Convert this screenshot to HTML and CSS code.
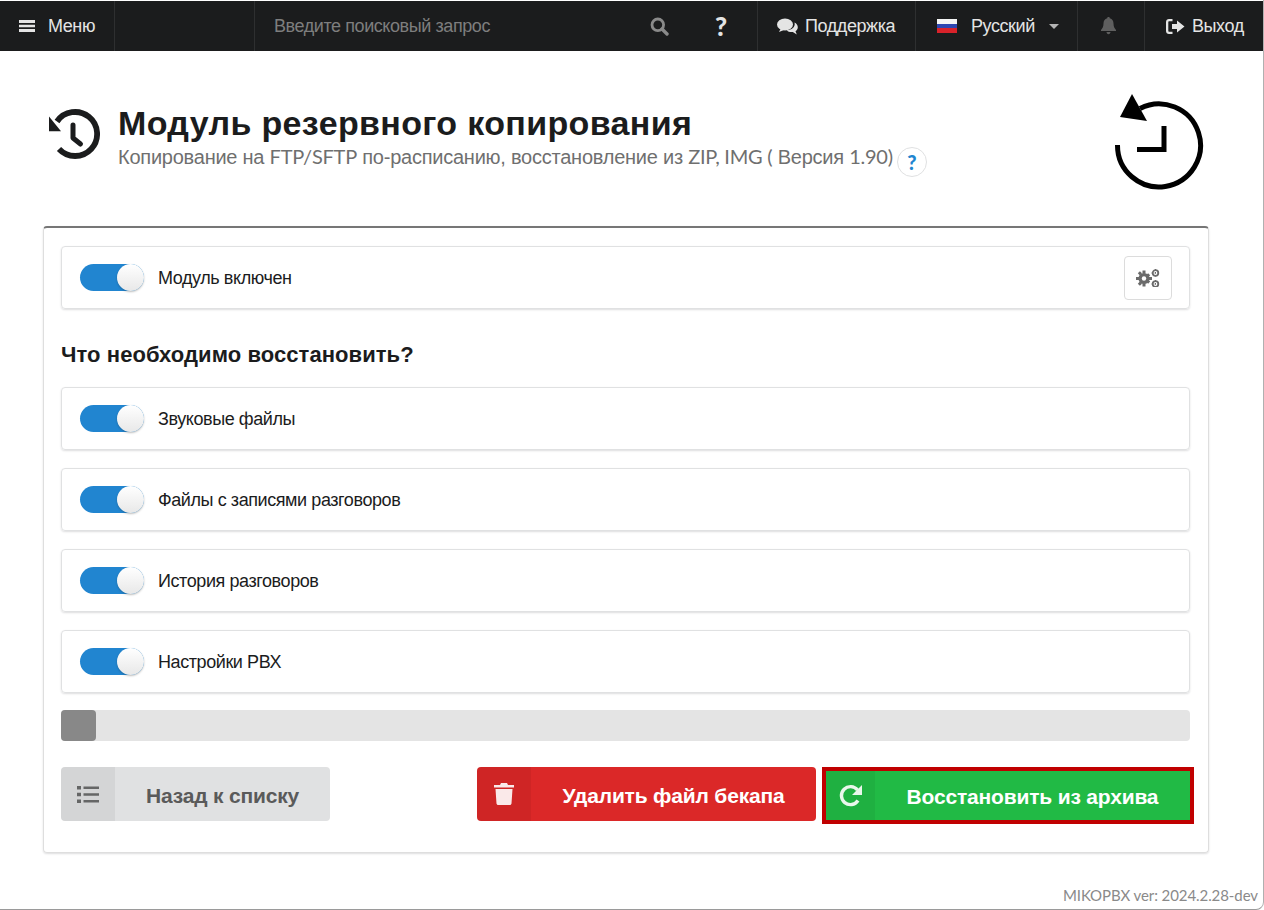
FILE: index.html
```html
<!DOCTYPE html>
<html lang="ru">
  <head>
    <meta charset="UTF-8" />
    <title>Модуль резервного копирования</title>
    <link rel="stylesheet" href="styles.css">
  </head>
  <body>
    <div class="window">
      <nav class="topbar">
        <a class="top-item menu-item">
          <svg class="top-icon" width="16" height="14" viewBox="0 0 16 14"><path fill="#e4e4e4" d="M0 1h16v3H0zM0 5.700h16v2.600H0zM0 10h16v3H0z"/></svg>
          Меню
        </a>
        <div class="top-spacer"></div>
        <div class="search">Введите поисковый запрос</div>
        <svg class="search-icon" width="19" height="19" viewBox="0 0 19 19"><circle cx="7.800" cy="7.800" r="5.800" fill="none" stroke="#8a8a8a" stroke-width="2.800"/><path d="M12 12l5 5" stroke="#8a8a8a" stroke-width="3.400" stroke-linecap="round"/></svg>
        <span class="help-mark">?</span>
        <a class="top-item support">
          <svg width="21" height="17" viewBox="0 0 21 17"><ellipse cx="8" cy="6.500" rx="8" ry="6" fill="#e4e4e4"/><path d="M2 14l2-4 3 2z" fill="#e4e4e4"/><path d="M17.500 4.600c2 1 3.300 2.700 3.300 4.600 0 1.600-.9 3-2.300 4l1.300 3.200-4-2.400c-2.400.3-4.800-.3-6.300-1.800 4.700.2 9.300-2.900 8-7.600z" fill="#e4e4e4"/></svg>
          Поддержка
        </a>
        <a class="top-item lang">
          <span class="flag"><i class="flag-white"></i><i class="flag-blue"></i><i class="flag-red"></i></span>
          <span class="lang-name">Русский</span>
          <i class="caret"></i>
        </a>
        <a class="top-item bell">
          <svg width="15" height="18" viewBox="0 0 15 18"><path fill="#5f5f5f" d="M7.500 0c.8 0 1.300.5 1.300 1.300 2.600.6 3.700 2.800 3.700 5.200 0 3.600 1.200 5 2.500 6.500v1H0v-1c1.300-1.500 2.500-2.900 2.500-6.500 0-2.400 1.100-4.600 3.700-5.200C6.200.5 6.700 0 7.500 0zM5.500 15h4c0 1.200-.9 2.200-2 2.200s-2-1-2-2.200z"/></svg>
        </a>
        <a class="top-item logout">
          <svg width="19" height="15" viewBox="0 0 19 15"><path fill="#e4e4e4" d="M6.500 0v2.300H3.300c-.6 0-1 .4-1 1v8.400c0 .6.400 1 1 1h3.200V15H3C1.300 15 0 13.700 0 12V3c0-1.700 1.300-3 3-3zM11 1.500l7.500 6-7.500 6V10H6V5h5z"/></svg>
          Выход
        </a>
      </nav>

      <main class="content">
        <header class="page-header">
          <svg class="header-icon" width="54" height="54" viewBox="0 0 54 54"><path fill="none" stroke="#1b1c1d" stroke-width="5.800" d="M11 12.500A22 22 0 1 1 13 40"/><path fill="#1b1c1d" d="M3 7.500l12 14.800H3z"/><path fill="none" stroke="#1b1c1d" stroke-width="5" stroke-linecap="round" stroke-linejoin="round" d="M27 16v13l7.500 6"/></svg>
          <div class="header-text">
            <h1>Модуль резервного копирования</h1>
            <p><span class="subtitle">Копирование на <span class="lat">FTP/SFTP</span> по-расписанию, восстановление из <span class="lat">ZIP, IMG (</span> Версия <span class="lat">1.90)</span></span> <span class="hint">?</span></p>
          </div>
          <svg class="module-logo" width="90" height="96" viewBox="0 0 90 96"><path fill="none" stroke="#000" stroke-width="5" d="M26 14.500A41.500 41.500 0 1 1 3.500 51"/><path fill="#000" d="M18 0l15 27-27-4z"/><path fill="none" stroke="#000" stroke-width="5" d="M50 32v23.500H23"/></svg>
        </header>

        <section class="panel">
          <div class="row">
            <span class="toggle"><i class="knob"></i></span>
            <label>Модуль включен</label>
            <button class="gear-btn" type="button">
              <svg width="24" height="18" viewBox="0 0 24 18"><g fill="#6b6b6b"><circle cx="8" cy="9.500" r="5.500"/><path d="M6.500 1.500h3v3h-3zM6.500 14.500h3v3h-3zM0 8h3v3H0zM13 8h3v3h-3zM1.800 4.300l2.100-2.100 2.100 2.100-2.100 2.100zM10 12.600l2.100-2.100 2.100 2.100-2.100 2.100zM1.800 14.700l2.100-2.100 2.100 2.100-2.100 2.100zM10 6.300l2.100-2.100 2.100 2.100-2.100 2.100z"/></g><circle cx="8" cy="9.500" r="2.200" fill="#fff"/><g fill="none" stroke="#6b6b6b"><circle cx="19.500" cy="4" r="2.800" stroke-width="1.800"/><circle cx="19.500" cy="15" r="2.800" stroke-width="1.800"/><path stroke-width="1" stroke-dasharray="1.500 1.500" d="M19.500 0v8M15.500 4h8M19.500 11v7M15.500 15h8"/></g></svg>
            </button>
          </div>

          <h2>Что необходимо восстановить?</h2>

          <div class="row"><span class="toggle"><i class="knob"></i></span><label>Звуковые файлы</label></div>
          <div class="row"><span class="toggle"><i class="knob"></i></span><label>Файлы с записями разговоров</label></div>
          <div class="row"><span class="toggle"><i class="knob"></i></span><label>История разговоров</label></div>
          <div class="row"><span class="toggle"><i class="knob"></i></span><label>Настройки РВХ</label></div>

          <div class="progress"><div class="progress-bar"></div></div>

          <div class="actions">
            <button class="btn btn-grey" type="button">
              <span class="btn-icon"><svg width="22" height="17" viewBox="0 0 22 17"><path fill="currentColor" d="M0 0h4v3.500H0zM0 6.700h4v3.500H0zM0 13.500h4V17H0zM6.500.5H22v2.600H6.500zM6.500 7.200H22v2.600H6.500zM6.500 14H22v2.600H6.500z"/></svg></span>
              <span class="btn-label">Назад к списку</span>
            </button>
            <div class="actions-right">
              <button class="btn btn-red" type="button">
                <span class="btn-icon"><svg width="20" height="22" viewBox="0 0 20 22"><path fill="currentColor" d="M7 0h6l1 2h6v2.500H0V2h6zM1.500 6h17l-1 14.500c-.1.900-.8 1.500-1.700 1.500H4.200c-.9 0-1.600-.6-1.700-1.500z"/></svg></span>
                <span class="btn-label">Удалить файл бекапа</span>
              </button>
              <button class="btn btn-green" type="button">
                <span class="btn-icon"><svg width="24" height="24" viewBox="0 0 24 24"><path fill="none" stroke="currentColor" stroke-width="3.400" d="M19 16.500A9 9 0 1 1 18.500 6"/><path fill="currentColor" d="M23 1v10H13z"/></svg></span>
                <span class="btn-label">Восстановить из архива</span>
              </button>
            </div>
          </div>
        </section>
      </main>
      <footer class="version">MIKOPBX ver: 2024.2.28-dev</footer>
    </div>
  </body>
</html>
```

FILE: styles.css
```css
html,
body {
  margin: 0;
  height: 100%;
  background: #fff;
}

body {
  font-family: "Liberation Sans", Arial, sans-serif;
  color: #1b1c1d;
  font-size: 18px;
  letter-spacing: -0.42px;
  overflow: hidden;
}

.lat,
.version {
  font-family: Lato, "Liberation Sans", sans-serif;
}

.window {
  height: 909px;
  width: 1263px;
  border-bottom: 1px solid #9a9a9a;
  border-right: 1px solid #b0b0b0;
  border-bottom-right-radius: 8px;
  display: flex;
  flex-direction: column;
  background: #fff;
}

/* top menu */
.topbar {
  height: 50px;
  margin-top: 1px;
  background: #1b1c1d;
  color: #e4e4e4;
  display: flex;
  align-items: stretch;
  flex-shrink: 0;
  font-size: 18px;
}

.top-item {
  display: flex;
  align-items: center;
  border-left: 1px solid #2e2f30;
  white-space: nowrap;
}

.menu-item {
  width: 115px;
  padding-left: 19px;
  gap: 13px;
  box-sizing: border-box;
  border-left: 0;
  border-right: 1px solid #2e2f30;
}

.top-spacer {
  width: 139px;
  border-right: 1px solid #2e2f30;
}

.search {
  width: 395px;
  padding-left: 19px;
  box-sizing: border-box;
  color: #7e7e7e;
  display: flex;
  align-items: center;
}

.search-icon {
  align-self: center;
}

.help-mark {
  width: 42px;
  margin-left: 46px;
  font-weight: 900;
  font-size: 26px;
  font-family: Lato, sans-serif;
  line-height: 50px;
}

.support {
  width: 158px;
  box-sizing: border-box;
  padding-left: 19px;
  gap: 7px;
}

.lang {
  width: 162px;
  box-sizing: border-box;
  padding-left: 21px;
}

.flag {
  width: 20px;
  height: 14px;
  margin-right: 14px;
  display: flex;
  flex-direction: column;
}

.flag i {
  flex: 1;
}

.flag-white {
  background: #f4f4f4;
}

.flag-blue {
  background: #2d45b0;
}

.flag-red {
  background: #d8222a;
}

.lang-name {
  margin-right: 14px;
}

.caret {
  border: 5px solid transparent;
  border-top-color: #b4b4b4;
  border-bottom: 0;
}

.bell {
  width: 67px;
  box-sizing: border-box;
  padding-left: 23px;
}

.logout {
  flex: 1;
  padding-left: 21px;
  gap: 7px;
}

/* page */
.content {
  flex: 1;
  padding: 0 54px 0 43px;
}

.page-header {
  height: 175px;
  display: flex;
  align-items: flex-start;
}

.header-icon {
  margin: 58px 0 0 3px;
  flex-shrink: 0;
}

.header-text {
  flex: 1;
  margin: 50px 0 0 18px;
}

h1 {
  margin: 0;
  font-size: 34px;
  font-weight: 700;
  letter-spacing: 0.35px;
  line-height: 44px;
}

.header-text p {
  margin: -3px 0 0;
  font-size: 20px;
  letter-spacing: -0.24px;
  line-height: 26px;
  color: #6f6f6f;
  display: flex;
  align-items: center;
  gap: 4px;
}

.subtitle {
  margin-top: -6px;
}

.hint {
  width: 28px;
  height: 28px;
  margin-top: 5px;
  border: 1px solid #e0e1e2;
  border-radius: 50%;
  color: #2185d0;
  font-weight: 900;
  font-size: 20px;
  font-family: Lato, sans-serif;
  text-align: center;
  line-height: 28px;
}

.module-logo {
  margin: 43px 5px 0 0;
}

.panel {
  border: 1px solid #dedede;
  border-top: 2px solid #767676;
  border-radius: 4px;
  box-shadow: 0 1px 2px rgba(34, 36, 38, 0.15);
  padding: 18px 18px 0 17px;
  height: 627px;
  box-sizing: border-box;
  width: 1166px;
}

.row {
  height: 63px;
  box-sizing: border-box;
  border: 1px solid #e0e1e2;
  border-radius: 4px;
  box-shadow: 0 1px 2px rgba(34, 36, 38, 0.15);
  display: flex;
  align-items: center;
  padding-left: 18px;
  margin-bottom: 18px;
  color: #1b1c1d;
}

.row label {
  margin-left: 14px;
  padding-top: 2px;
  flex: 1;
}

.toggle {
  width: 64px;
  height: 27px;
  background: #2185d0;
  border-radius: 14px;
  position: relative;
  flex-shrink: 0;
}

.knob {
  position: absolute;
  right: 0;
  top: 0;
  width: 27px;
  height: 27px;
  border-radius: 50%;
  background: linear-gradient(#fff, #e8e8e8);
  box-shadow: 0 1px 2px rgba(34, 36, 38, 0.3);
}

.gear-btn {
  width: 48px;
  height: 44px;
  margin-right: 17px;
  background: #fff;
  border: 1px solid #dcdcdc;
  border-radius: 4px;
  padding: 0;
  display: flex;
  align-items: center;
  justify-content: center;
}

h2 {
  margin: 32px 0 18px;
  font-size: 22px;
  font-weight: 700;
  letter-spacing: 0.07px;
  line-height: 28px;
}

.progress {
  height: 31px;
  margin-top: -1px;
  background: #e4e4e4;
  border-radius: 4px;
  margin-bottom: 26px;
}

.progress-bar {
  width: 35px;
  height: 100%;
  background: #888;
  border-radius: 4px;
}

.actions {
  display: flex;
  justify-content: space-between;
  align-items: flex-start;
}

.actions-right {
  display: flex;
  gap: 6px;
  margin-right: -4px;
}

.btn {
  height: 54px;
  border: 0;
  border-radius: 4px;
  padding: 0;
  display: flex;
  align-items: stretch;
  font-family: inherit;
  font-size: 21px;
  font-weight: 700;
  letter-spacing: -0.18px;
  overflow: hidden;
}

.btn-icon {
  width: 54px;
  display: flex;
  align-items: center;
  justify-content: center;
  background: rgba(0, 0, 0, 0.05);
}

.btn-icon svg {
  opacity: 0.9;
}

.btn-label {
  flex: 1;
  display: flex;
  align-items: center;
  justify-content: center;
  padding-top: 4px;
}

.btn-grey {
  width: 269px;
  background: #e0e1e2;
  color: #5a5a5a;
}

.btn-red {
  width: 339px;
  background: #db2828;
  color: #fff;
}

.btn-green {
  width: 372px;
  height: 57px;
  background: #21ba45;
  color: #fff;
  border: 4px solid #c00000;
  border-radius: 0;
}

.btn-green .btn-icon {
  width: 49px;
}

.btn-green .btn-label {
  padding-top: 2px;
}

.version {
  height: 27px;
  text-align: right;
  padding-right: 5px;
  font-size: 15px;
  letter-spacing: -0.08px;
  color: #8a8a8a;
  line-height: 26px;
}
```
